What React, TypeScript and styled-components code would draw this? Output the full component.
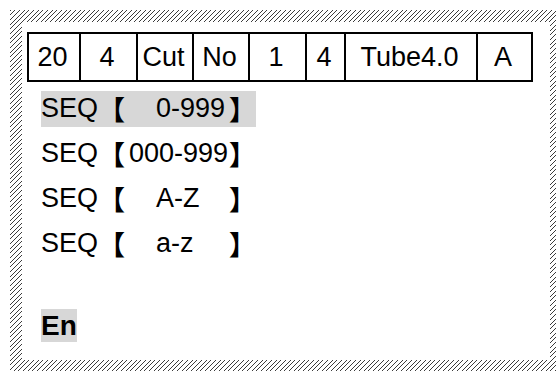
import React from "react";
import styled, { createGlobalStyle } from "styled-components";

const Global = createGlobalStyle`
  html, body {
    margin: 0;
    padding: 0;
    overflow: hidden;
    background: #ffffff;
  }
  body {
    font-family: "Liberation Sans", Arial, "Noto Sans CJK SC", sans-serif;
    color: #000;
  }
`;

const Frame = styled.div`
  box-sizing: border-box;
  margin: 10px 0 0 10px;
  width: 546px;
  height: 361px;
  padding: 12px 6px 11px 12px;
  background: repeating-linear-gradient(
    135deg,
    #3c3c3c 0px,
    #3c3c3c 0.9px,
    #ffffff 0.9px,
    #ffffff 3.3px
  );
`;

const Panel = styled.div`
  box-sizing: border-box;
  width: 100%;
  height: 100%;
  background: #ffffff;
  padding: 10px 0 0 5px;
  display: flex;
  flex-direction: column;
`;

const StatusBar = styled.div`
  display: flex;
  width: 506px;
  height: 50px;
  box-sizing: border-box;
  border: 2px solid #000;
`;

const Cell = styled.div<{ $w: number; $first?: boolean }>`
  box-sizing: border-box;
  width: ${(p) => p.$w}px;
  height: 100%;
  display: flex;
  align-items: center;
  justify-content: center;
  border-left: ${(p) => (p.$first ? "none" : "2px solid #000")};
  font-size: 27px;
  line-height: 1;
  padding-right: 3px;
`;

const List = styled.div`
  margin-top: 4px;
  padding-left: 14px;
  display: flex;
  flex-direction: column;
`;

const Row = styled.div`
  height: 45px;
  display: flex;
  align-items: center;
`;

const Label = styled.span<{ $selected?: boolean }>`
  display: inline-flex;
  align-items: center;
  height: 36px;
  font-size: 27px;
  white-space: pre;
  background: ${(p) => (p.$selected ? "#d7d7d7" : "transparent")};
`;

const Bracket = styled.span`
  font-family: "Noto Sans CJK SC", sans-serif;
  font-size: 27px;
  font-weight: bold;
  width: 27px;
  display: inline-block;
  line-height: 36px;
`;

const Value = styled.span<{ $indent: number }>`
  display: inline-block;
  box-sizing: border-box;
  width: 104px;
  padding-left: ${(p) => p.$indent}px;
`;

const Footer = styled.div`
  margin-top: 43px;
  padding-left: 14px;
  display: flex;
`;

const Lang = styled.span`
  display: inline-flex;
  align-items: center;
  justify-content: center;
  width: 36px;
  height: 33px;
  background: #d7d7d7;
  font-size: 28px;
  font-weight: bold;
`;

const cells = [
  { t: "20", w: 52 },
  { t: "4", w: 57 },
  { t: "Cut", w: 56 },
  { t: "No", w: 56 },
  { t: "1", w: 57 },
  { t: "4", w: 39 },
  { t: "Tube4.0", w: 132 },
  { t: "A", w: 55 },
];

const rows = [
  { v: "0-999", indent: 31, selected: true },
  { v: "000-999", indent: 4 },
  { v: "A-Z", indent: 31 },
  { v: "a-z", indent: 31 },
];

export default function App() {
  return (
    <>
      <Global />
      <Frame>
        <Panel>
          <StatusBar>
            {cells.map((c, i) => (
              <Cell key={i} $w={i === 0 ? 50 : c.w} $first={i === 0}>
                {c.t}
              </Cell>
            ))}
          </StatusBar>
          <List>
            {rows.map((r, i) => (
              <Row key={i}>
                <Label $selected={r.selected}>
                  SEQ
                  <Bracket>【</Bracket>
                  <Value $indent={r.indent}>{r.v}</Value>
                  <Bracket>】</Bracket>
                </Label>
              </Row>
            ))}
          </List>
          <Footer>
            <Lang>En</Lang>
          </Footer>
        </Panel>
      </Frame>
    </>
  );
}
